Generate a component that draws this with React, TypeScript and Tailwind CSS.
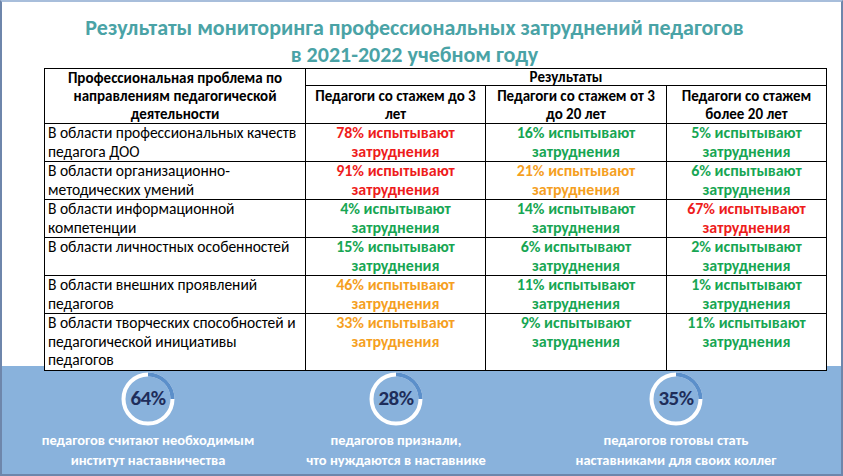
import React from 'react';

type Level = 'red' | 'green' | 'orange';

const colors: Record<Level, string> = {
  red: 'text-[#ee1c1c]',
  green: 'text-[#17a653]',
  orange: 'text-[#f5a01f]',
};

const rows: { area: string; cells: [string, Level][] }[] = [
  { area: 'В области профессиональных качеств педагога ДОО', cells: [['78%', 'red'], ['16%', 'green'], ['5%', 'green']] },
  { area: 'В области организационно-методических умений', cells: [['91%', 'red'], ['21%', 'orange'], ['6%', 'green']] },
  { area: 'В области информационной компетенции', cells: [['4%', 'green'], ['14%', 'green'], ['67%', 'red']] },
  { area: 'В области личностных особенностей', cells: [['15%', 'green'], ['6%', 'green'], ['2%', 'green']] },
  { area: 'В области внешних проявлений педагогов', cells: [['46%', 'orange'], ['11%', 'green'], ['1%', 'green']] },
  { area: 'В области творческих способностей и педагогической инициативы педагогов', cells: [['33%', 'orange'], ['9%', 'green'], ['11%', 'green']] },
];

const stats = [
  { value: '64%', lines: ['педагогов считают необходимым', 'институт наставничества'] },
  { value: '28%', lines: ['педагогов признали,', 'что нуждаются в наставнике'] },
  { value: '35%', lines: ['педагогов готовы стать', 'наставниками для своих коллег'] },
];

// white ring with a quarter arc from 12 to 3 o'clock
const Ring = ({ value }: { value: string }) => (
  <div className="relative w-[54px] h-[54px]">
    <svg width="54" height="54" viewBox="0 0 54 54" className="absolute inset-0">
      <circle cx="27" cy="27" r="24.5" fill="none" stroke="#ffffff" strokeWidth="4" />
      <path d="M27 2.5 A24.5 24.5 0 0 1 51.5 27" fill="none" stroke="#5b8fca" strokeWidth="4" />
    </svg>
    <div className="absolute inset-0 flex items-center justify-center text-[21px] font-bold text-[#1e2d5a] tracking-[-0.5px]">
      {value}
    </div>
  </div>
);

const App = () => {
  return (
    <div className="w-[843px] h-[476px] bg-white border-2 border-[#6e86ab] border-t-[#a8bedb] flex flex-col overflow-hidden font-['Carlito','Lato',sans-serif]">
      {/* Title */}
      <div className="pt-[12px] pr-[14px] text-center text-[22px] leading-[27px] font-bold text-[#4aa3a6]">
        <div>Результаты мониторинга профессиональных затруднений педагогов</div>
        <div>в 2021-2022 учебном году</div>
      </div>

      {/* Table */}
      <div className="relative z-10 pl-[42px]">
        <table className="border-collapse text-black bg-white">
          <colgroup>
            <col className="w-[261px]" />
            <col className="w-[180px]" />
            <col className="w-[181px]" />
            <col className="w-[160px]" />
          </colgroup>
          <thead>
            <tr className="h-[17px]">
              <th rowSpan={2} className="border border-black font-bold text-center text-[15px] leading-[18px] px-3 py-0 align-middle">
                Профессиональная проблема по направлениям педагогической деятельности
              </th>
              <th colSpan={3} className="border border-black font-bold text-center text-[15px] leading-[16px] p-0">
                Результаты
              </th>
            </tr>
            <tr className="h-[37px]">
              <th className="border border-black font-bold text-center text-[15px] leading-[18px] px-1 py-0">Педагоги со стажем до 3 лет</th>
              <th className="border border-black font-bold text-center text-[15px] leading-[18px] px-1 py-0">Педагоги со стажем от 3 до 20 лет</th>
              <th className="border border-black font-bold text-center text-[15px] leading-[18px] px-3 py-0">Педагоги со стажем более 20 лет</th>
            </tr>
          </thead>
          <tbody>
            {rows.map((r, i) => (
              <tr key={i} className={i === rows.length - 1 ? 'h-[57px]' : ''}>
                <td className="border border-black align-top px-[3px] py-0 text-[15.5px] leading-[18.5px]">{r.area}</td>
                {r.cells.map(([v, lvl], j) => (
                  <td key={j} className={`border border-black align-top text-center font-bold text-[16px] leading-[18.5px] p-0 ${colors[lvl]}`}>
                    {v} испытывают
                    <br />
                    затруднения
                  </td>
                ))}
              </tr>
            ))}
          </tbody>
        </table>
      </div>

      {/* Blue band with mentoring stats */}
      <div className="flex-1 -mt-[5px] bg-[#89b2dc] flex pl-[26px] pt-[6px] gap-[8px]">
        {stats.map((s, i) => (
          <div key={i} className={`w-[240px] flex flex-col items-center ${i === 2 ? 'ml-[32px]' : ''}`}>
            <Ring value={s.value} />
            <div className="mt-[4px] text-center text-white font-bold text-[14.5px] leading-[20px]">
              {s.lines.map((l, k) => (
                <div key={k}>{l}</div>
              ))}
            </div>
          </div>
        ))}
      </div>
    </div>
  );
};

export default App;
